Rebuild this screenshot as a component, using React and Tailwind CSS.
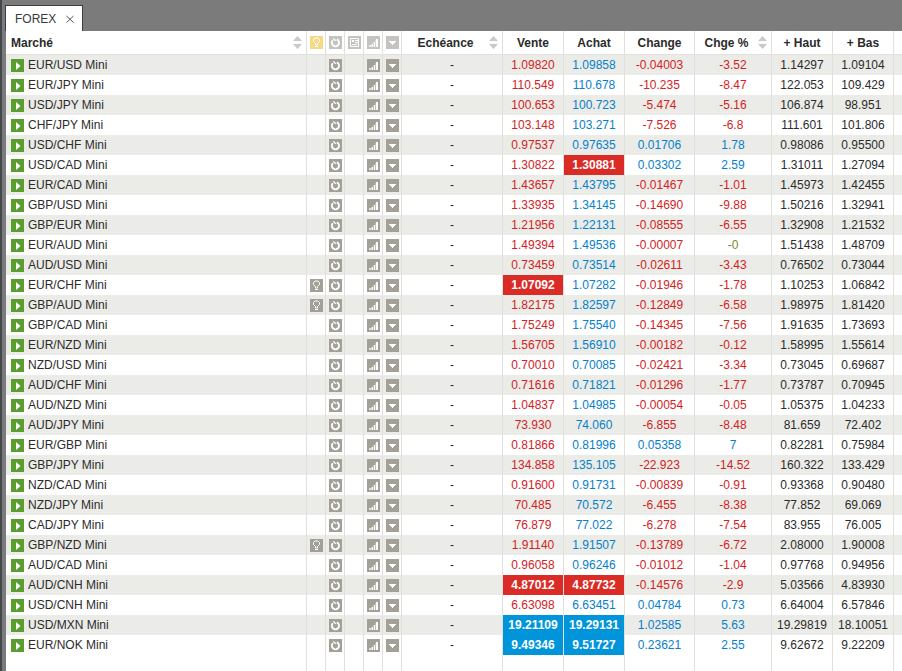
import React, { useState } from 'react';

const MARKETS = [
  { name: 'EUR/USD Mini', bid: '1.09820', ask: '1.09858', change: '-0.04003', pct: '-3.52', high: '1.14297', low: '1.09104' },
  { name: 'EUR/JPY Mini', bid: '110.549', ask: '110.678', change: '-10.235', pct: '-8.47', high: '122.053', low: '109.429' },
  { name: 'USD/JPY Mini', bid: '100.653', ask: '100.723', change: '-5.474', pct: '-5.16', high: '106.874', low: '98.951' },
  { name: 'CHF/JPY Mini', bid: '103.148', ask: '103.271', change: '-7.526', pct: '-6.8', high: '111.601', low: '101.806' },
  { name: 'USD/CHF Mini', bid: '0.97537', ask: '0.97635', change: '0.01706', pct: '1.78', high: '0.98086', low: '0.95500' },
  { name: 'USD/CAD Mini', bid: '1.30822', ask: '1.30881', change: '0.03302', pct: '2.59', high: '1.31011', low: '1.27094', askFlash: 'down' },
  { name: 'EUR/CAD Mini', bid: '1.43657', ask: '1.43795', change: '-0.01467', pct: '-1.01', high: '1.45973', low: '1.42455' },
  { name: 'GBP/USD Mini', bid: '1.33935', ask: '1.34145', change: '-0.14690', pct: '-9.88', high: '1.50216', low: '1.32941' },
  { name: 'GBP/EUR Mini', bid: '1.21956', ask: '1.22131', change: '-0.08555', pct: '-6.55', high: '1.32908', low: '1.21532' },
  { name: 'EUR/AUD Mini', bid: '1.49394', ask: '1.49536', change: '-0.00007', pct: '-0', high: '1.51438', low: '1.48709' },
  { name: 'AUD/USD Mini', bid: '0.73459', ask: '0.73514', change: '-0.02611', pct: '-3.43', high: '0.76502', low: '0.73044' },
  { name: 'EUR/CHF Mini', bid: '1.07092', ask: '1.07282', change: '-0.01946', pct: '-1.78', high: '1.10253', low: '1.06842', bidFlash: 'down', idea: true },
  { name: 'GBP/AUD Mini', bid: '1.82175', ask: '1.82597', change: '-0.12849', pct: '-6.58', high: '1.98975', low: '1.81420', idea: true },
  { name: 'GBP/CAD Mini', bid: '1.75249', ask: '1.75540', change: '-0.14345', pct: '-7.56', high: '1.91635', low: '1.73693' },
  { name: 'EUR/NZD Mini', bid: '1.56705', ask: '1.56910', change: '-0.00182', pct: '-0.12', high: '1.58995', low: '1.55614' },
  { name: 'NZD/USD Mini', bid: '0.70010', ask: '0.70085', change: '-0.02421', pct: '-3.34', high: '0.73045', low: '0.69687' },
  { name: 'AUD/CHF Mini', bid: '0.71616', ask: '0.71821', change: '-0.01296', pct: '-1.77', high: '0.73787', low: '0.70945' },
  { name: 'AUD/NZD Mini', bid: '1.04837', ask: '1.04985', change: '-0.00054', pct: '-0.05', high: '1.05375', low: '1.04233' },
  { name: 'AUD/JPY Mini', bid: '73.930', ask: '74.060', change: '-6.855', pct: '-8.48', high: '81.659', low: '72.402' },
  { name: 'EUR/GBP Mini', bid: '0.81866', ask: '0.81996', change: '0.05358', pct: '7', high: '0.82281', low: '0.75984' },
  { name: 'GBP/JPY Mini', bid: '134.858', ask: '135.105', change: '-22.923', pct: '-14.52', high: '160.322', low: '133.429' },
  { name: 'NZD/CAD Mini', bid: '0.91600', ask: '0.91731', change: '-0.00839', pct: '-0.91', high: '0.93368', low: '0.90480' },
  { name: 'NZD/JPY Mini', bid: '70.485', ask: '70.572', change: '-6.455', pct: '-8.38', high: '77.852', low: '69.069' },
  { name: 'CAD/JPY Mini', bid: '76.879', ask: '77.022', change: '-6.278', pct: '-7.54', high: '83.955', low: '76.005' },
  { name: 'GBP/NZD Mini', bid: '1.91140', ask: '1.91507', change: '-0.13789', pct: '-6.72', high: '2.08000', low: '1.90008', idea: true },
  { name: 'AUD/CAD Mini', bid: '0.96058', ask: '0.96246', change: '-0.01012', pct: '-1.04', high: '0.97768', low: '0.94956' },
  { name: 'AUD/CNH Mini', bid: '4.87012', ask: '4.87732', change: '-0.14576', pct: '-2.9', high: '5.03566', low: '4.83930', bidFlash: 'down', askFlash: 'down' },
  { name: 'USD/CNH Mini', bid: '6.63098', ask: '6.63451', change: '0.04784', pct: '0.73', high: '6.64004', low: '6.57846' },
  { name: 'USD/MXN Mini', bid: '19.21109', ask: '19.29131', change: '1.02585', pct: '5.63', high: '19.29819', low: '18.10051', bidFlash: 'up', askFlash: 'up' },
  { name: 'EUR/NOK Mini', bid: '9.49346', ask: '9.51727', change: '0.23621', pct: '2.55', high: '9.62672', low: '9.22209', bidFlash: 'up', askFlash: 'up' },
];

const GLYPHS = {
  play: <path d="M5 3v8l4.5-4z" fill="#fff" />,
  idea: (
    <g fill="none" stroke="#fff">
      <path d="M5.5 9V7.5l-2-2v-2L5 2h3l1.5 1.5v2l-2 2V9z" />
      <path d="M5 10.5h3" />
    </g>
  ),
  deal: (
    <g fill="none" stroke="#fff">
      <path d="M7.8 3.4A3.6 3.6 0 1 1 4 4.1" strokeWidth="1.8" />
      <path d="M4.2 2.4L7 4.8" strokeWidth="1.2" />
    </g>
  ),
  news: (
    <g fill="none" stroke="#fff">
      <path d="M2.5 2.5h8v8h-8z" />
      <path d="M4 4.5h2M4 5.5h2M7 4.5h3M7 6.5h3M4 8.5h5" />
    </g>
  ),
  chart: (
    <g fill="#fff">
      <path d="M2 9h2v2H2z" opacity=".7" />
      <path d="M4 8h2v3H4z" opacity=".5" />
      <path d="M5 8h1v3H5zM7 6h1v5H7zM9 3h2v8H9z" />
      <path d="M6 6h1v5H6zM8 4h1v7H8z" opacity=".3" />
    </g>
  ),
  menu: <path d="M3 5h7v1H9v1H8v1H7v1H6V8H5V7H4V6H3z" fill="#fff" />,
};

function Icon({ type, className }) {
  return (
    <svg viewBox="0 0 13 13" className={`block size-[13px] ${className}`} aria-hidden="true">
      {GLYPHS[type]}
    </svg>
  );
}

function IconButton({ type, label, className = 'bg-[#a3a098]' }) {
  return (
    <button type="button" aria-label={label} className="block cursor-pointer">
      <Icon type={type} className={className} />
    </button>
  );
}

function SortButton({ label }) {
  return (
    <button type="button" aria-label={`Trier par ${label}`} className="mr-1 shrink-0 cursor-pointer">
      <svg viewBox="0 0 9 13" className="block h-[13px] w-[9px] text-[#c9c9c5]" aria-hidden="true">
        <path d="M0 5h9L4.5 0zM0 8h9L4.5 13z" fill="currentColor" />
      </svg>
    </button>
  );
}

const cell = 'border-r border-[#e1e1db] p-0';
const head = 'h-6 border-b border-r border-[#e1e1db] p-0 font-bold';

function tone(value) {
  if (value === '-0') return 'text-[#7c8c1c]';
  return value.startsWith('-') ? 'text-[#d4221f]' : 'text-[#0680cc]';
}

function PriceCell({ value, flash, color }) {
  let style = color;
  if (flash === 'down') style = 'bg-[#da2b27] font-bold text-white bg-clip-padding';
  if (flash === 'up') style = 'bg-[#0095da] font-bold text-white bg-clip-padding';
  return <td className={`${cell} ${style}`}>{value}</td>;
}

function MarketRow({ market }) {
  return (
    <tr className="h-5 odd:bg-[#ebece7]">
      <td className={`${cell} text-left`}>
        <div className="flex items-center gap-1 pl-[5px]">
          <IconButton type="play" label={`Ouvrir ${market.name}`} className="bg-[#5a9e2f]" />
          <span>{market.name}</span>
        </div>
      </td>
      <td className={`${cell} pl-[3px]`}>{market.idea && <IconButton type="idea" label="Idée de trading" />}</td>
      <td className={`${cell} pl-[3px]`}><IconButton type="deal" label="Négocier" /></td>
      <td className={cell} />
      <td className={`${cell} pl-[3px]`}><IconButton type="chart" label="Graphique" /></td>
      <td className={`${cell} pl-[3px]`}><IconButton type="menu" label="Options" /></td>
      <td className={cell}>-</td>
      <PriceCell value={market.bid} flash={market.bidFlash} color="text-[#d4221f]" />
      <PriceCell value={market.ask} flash={market.askFlash} color="text-[#0680cc]" />
      <td className={`${cell} ${tone(market.change)}`}>{market.change}</td>
      <td className={`${cell} ${tone(market.pct)}`}>{market.pct}</td>
      <td className={cell}>{market.high}</td>
      <td className={cell}>{market.low}</td>
      <td className="p-0" />
    </tr>
  );
}

function MarketTable() {
  return (
    <table className="w-full table-fixed border-separate border-spacing-0 bg-white text-center text-xs/5 text-[#2b2b2b]">
      <colgroup>
        <col />
        <col className="w-[19px]" />
        <col className="w-[19px]" />
        <col className="w-[19px]" />
        <col className="w-[19px]" />
        <col className="w-[19px]" />
        <col className="w-[101px]" />
        <col className="w-[61px]" />
        <col className="w-[61px]" />
        <col className="w-[70px]" />
        <col className="w-[77px]" />
        <col className="w-[61px]" />
        <col className="w-[61px]" />
        <col className="w-2" />
      </colgroup>
      <thead>
        <tr className="h-6">
          <th scope="col" className={head}>
            <div className="flex items-center justify-between pl-[5px]">
              Marché
              <SortButton label="marché" />
            </div>
          </th>
          <th className={`${head} pl-[3px]`}><Icon type="idea" className="bg-[#f6d984]" /></th>
          <th className={`${head} pl-[3px]`}><Icon type="deal" className="bg-[#c4c3bf]" /></th>
          <th className={`${head} pl-[3px]`}><Icon type="news" className="bg-[#c4c3bf]" /></th>
          <th className={`${head} pl-[3px]`}><Icon type="chart" className="bg-[#c4c3bf]" /></th>
          <th className={`${head} pl-[3px]`}><Icon type="menu" className="bg-[#c4c3bf]" /></th>
          <th scope="col" className={head}>
            <div className="flex items-center">
              <span className="flex-1">Echéance</span>
              <SortButton label="échéance" />
            </div>
          </th>
          <th scope="col" className={head}>Vente</th>
          <th scope="col" className={head}>Achat</th>
          <th scope="col" className={head}>Change</th>
          <th scope="col" className={head}>
            <div className="flex items-center">
              <span className="flex-1">Chge %</span>
              <SortButton label="variation" />
            </div>
          </th>
          <th scope="col" className={head}>+ Haut</th>
          <th scope="col" className={head}>+ Bas</th>
          <th className="border-b border-[#e1e1db] p-0" />
        </tr>
      </thead>
      <tbody>
        {MARKETS.map((m) => (
          <MarketRow key={m.name} market={m} />
        ))}
      </tbody>
      {/* empty row carries the column rules down to the bottom of the panel */}
      <tfoot>
        <tr className="h-4">
          {Array.from({ length: 13 }, (_, i) => (
            <td key={i} className={cell} />
          ))}
          <td className="p-0" />
        </tr>
      </tfoot>
    </table>
  );
}

export default function App() {
  const [open, setOpen] = useState(true);

  return (
    <div className="flex min-h-screen flex-col border-l-2 border-[#43484d] bg-[#7b7b7b] font-['Liberation_Sans',Arial,sans-serif]">
      <div className="flex h-[31px] items-end pl-[3px]">
        {open && (
          <div className="flex h-[26px] items-center gap-2 border border-b-0 border-[#3c3c3c] bg-white pr-[6px] pl-[9px]">
            <button type="button" className="text-xs text-[#3a3a3a]">FOREX</button>
            <button type="button" aria-label="Fermer" onClick={() => setOpen(false)} className="p-[2px]">
              <svg viewBox="0 0 8 8" className="block size-2" aria-hidden="true">
                <path d="M.5 1l7 6.500M7.500 1L.5 7.500" stroke="#555" fill="none" />
              </svg>
            </button>
          </div>
        )}
      </div>
      <div className="flex flex-1 pl-1">
        <MarketTable />
      </div>
    </div>
  );
}
